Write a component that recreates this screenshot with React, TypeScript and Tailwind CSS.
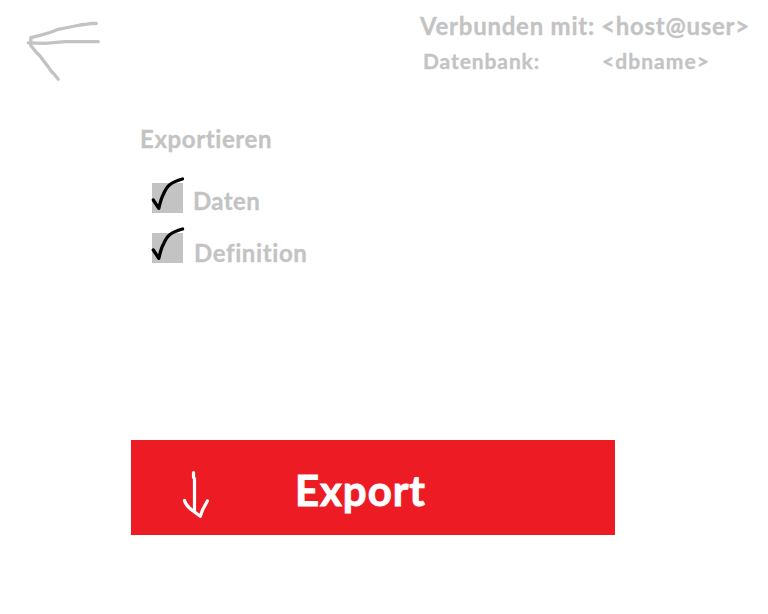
import React from "react";

function BackArrow() {
  return (
    <svg
      width="84"
      height="68"
      viewBox="20 16 84 68"
      fill="none"
      stroke="#c3c3c3"
      strokeWidth="3.3"
      strokeLinecap="round"
      strokeLinejoin="round"
    >
      <path d="M96.300 23.500H91L87 24.200L80 25L70 27L57 29.700L50 32.500L40 35.300L30.800 37.600V45.500L36 52L40 56L48.300 67L51.500 71.500L54 74L58.300 79.200" />
      <path d="M28.300 42.800L45 43.300L65 41.700H98.300" />
    </svg>
  );
}

function CheckMark() {
  return (
    <svg
      className="absolute -left-1 -top-2"
      width="40"
      height="40"
      viewBox="148 175 40 40"
      fill="none"
      stroke="#000"
      strokeWidth="3.3"
      strokeLinecap="round"
      strokeLinejoin="round"
    >
      <path d="M153.300 200L158.800 208.300C160 203 161 198.500 163.500 194C165 190.500 167.500 186.500 170 184.500C173 182 178 180.200 182.500 179" />
    </svg>
  );
}

function Option({ children }: { children: React.ReactNode }) {
  return (
    <label className="flex">
      <span className="relative h-[30px] w-[31px] bg-[#c3c3c3]">
        <CheckMark />
      </span>
      {children}
    </label>
  );
}

export default function App() {
  return (
    <div className="h-[614px] w-[768px] overflow-hidden bg-white font-['Lato',sans-serif] font-bold text-[#c3c3c3] [font-variant-ligatures:none] [-webkit-text-stroke:0.3px_currentColor]">
      <header className="flex h-[123px] justify-between pl-5">
        <button className="mt-4 h-[68px]" aria-label="Zurück">
          <BackArrow />
        </button>
        <div className="grid w-[348px] grid-cols-[181px_1fr] grid-rows-[35px_32px] whitespace-nowrap pt-2.5 leading-8">
          <span className="text-[24px] tracking-[0.75px]">Verbunden mit:</span>
          <span className="text-[24px] tracking-[0.75px]">&lt;host@user&gt;</span>
          <span className="pl-[3px] text-[21px] tracking-[0.9px]">Datenbank:</span>
          <span className="pl-px text-[21px] tracking-[1.05px]">&lt;dbname&gt;</span>
        </div>
      </header>
      <main>
        <h1 className="ml-[140px] h-[60px] text-[24px] leading-8 tracking-[0.6px]">Exportieren</h1>
        <div className="ml-[152px] flex h-[257px] flex-col gap-5">
          <Option>
            <span className="ml-[10px] mt-[2px] h-7 text-[24px] leading-8 tracking-[0.4px]">Daten</span>
          </Option>
          <Option>
            <span className="ml-[11px] mt-1 h-[26px] text-[24px] leading-8 tracking-[0.6px]">Definition</span>
          </Option>
        </div>
        <button className="ml-[131px] flex h-[95px] w-[484px] bg-[#ed1c24] text-white">
          <svg
            className="ml-[49px] mt-7"
            width="32"
            height="54"
            viewBox="180 468 32 54"
            fill="none"
            stroke="currentColor"
            strokeWidth="3.2"
            strokeLinecap="round"
            strokeLinejoin="round"
          >
            <path d="M193.500 472.700V477L194.500 479V510" />
            <path d="M184.500 500.500C185.500 504.500 188.500 507.500 192.500 510.500L200.300 516.300L202.500 510L207.500 500.800" />
          </svg>
          <span className="ml-[83px] mt-[26px] text-[42px] leading-[48px] tracking-[0.9px] [-webkit-text-stroke:0.9px_currentColor]">
            Export
          </span>
        </button>
      </main>
    </div>
  );
}
